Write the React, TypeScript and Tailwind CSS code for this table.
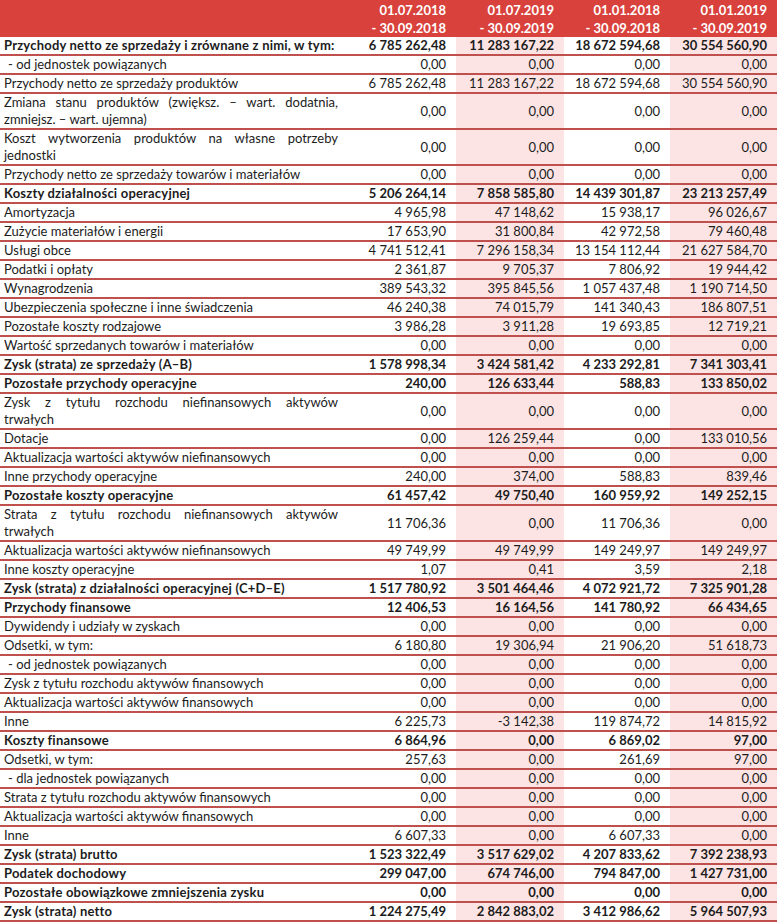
import React from 'react';

interface Row {
  label: string[];
  values: string[];
  bold?: boolean;
  indent?: boolean;
}

const Z = ['0,00', '0,00', '0,00', '0,00'];

const rows: Row[] = [
  { label: ['Przychody netto ze sprzedaży i zrównane z nimi, w tym:'], values: ['6 785 262,48', '11 283 167,22', '18 672 594,68', '30 554 560,90'], bold: true },
  { label: ['- od jednostek powiązanych'], values: Z, indent: true },
  { label: ['Przychody netto ze sprzedaży produktów'], values: ['6 785 262,48', '11 283 167,22', '18 672 594,68', '30 554 560,90'] },
  { label: ['Zmiana stanu produktów (zwiększ. – wart. dodatnia,', 'zmniejsz. – wart. ujemna)'], values: Z },
  { label: ['Koszt wytworzenia produktów na własne potrzeby', 'jednostki'], values: Z },
  { label: ['Przychody netto ze sprzedaży towarów i materiałów'], values: Z },
  { label: ['Koszty działalności operacyjnej'], values: ['5 206 264,14', '7 858 585,80', '14 439 301,87', '23 213 257,49'], bold: true },
  { label: ['Amortyzacja'], values: ['4 965,98', '47 148,62', '15 938,17', '96 026,67'] },
  { label: ['Zużycie materiałów i energii'], values: ['17 653,90', '31 800,84', '42 972,58', '79 460,48'] },
  { label: ['Usługi obce'], values: ['4 741 512,41', '7 296 158,34', '13 154 112,44', '21 627 584,70'] },
  { label: ['Podatki i opłaty'], values: ['2 361,87', '9 705,37', '7 806,92', '19 944,42'] },
  { label: ['Wynagrodzenia'], values: ['389 543,32', '395 845,56', '1 057 437,48', '1 190 714,50'] },
  { label: ['Ubezpieczenia społeczne i inne świadczenia'], values: ['46 240,38', '74 015,79', '141 340,43', '186 807,51'] },
  { label: ['Pozostałe koszty rodzajowe'], values: ['3 986,28', '3 911,28', '19 693,85', '12 719,21'] },
  { label: ['Wartość sprzedanych towarów i materiałów'], values: Z },
  { label: ['Zysk (strata) ze sprzedaży (A–B)'], values: ['1 578 998,34', '3 424 581,42', '4 233 292,81', '7 341 303,41'], bold: true },
  { label: ['Pozostałe przychody operacyjne'], values: ['240,00', '126 633,44', '588,83', '133 850,02'], bold: true },
  { label: ['Zysk z tytułu rozchodu niefinansowych aktywów', 'trwałych'], values: Z },
  { label: ['Dotacje'], values: ['0,00', '126 259,44', '0,00', '133 010,56'] },
  { label: ['Aktualizacja wartości aktywów niefinansowych'], values: Z },
  { label: ['Inne przychody operacyjne'], values: ['240,00', '374,00', '588,83', '839,46'] },
  { label: ['Pozostałe koszty operacyjne'], values: ['61 457,42', '49 750,40', '160 959,92', '149 252,15'], bold: true },
  { label: ['Strata z tytułu rozchodu niefinansowych aktywów', 'trwałych'], values: ['11 706,36', '0,00', '11 706,36', '0,00'] },
  { label: ['Aktualizacja wartości aktywów niefinansowych'], values: ['49 749,99', '49 749,99', '149 249,97', '149 249,97'] },
  { label: ['Inne koszty operacyjne'], values: ['1,07', '0,41', '3,59', '2,18'] },
  { label: ['Zysk (strata) z działalności operacyjnej (C+D–E)'], values: ['1 517 780,92', '3 501 464,46', '4 072 921,72', '7 325 901,28'], bold: true },
  { label: ['Przychody finansowe'], values: ['12 406,53', '16 164,56', '141 780,92', '66 434,65'], bold: true },
  { label: ['Dywidendy i udziały w zyskach'], values: Z },
  { label: ['Odsetki, w tym:'], values: ['6 180,80', '19 306,94', '21 906,20', '51 618,73'] },
  { label: ['- od jednostek powiązanych'], values: Z, indent: true },
  { label: ['Zysk z tytułu rozchodu aktywów finansowych'], values: Z },
  { label: ['Aktualizacja wartości aktywów finansowych'], values: Z },
  { label: ['Inne'], values: ['6 225,73', '-3 142,38', '119 874,72', '14 815,92'] },
  { label: ['Koszty finansowe'], values: ['6 864,96', '0,00', '6 869,02', '97,00'], bold: true },
  { label: ['Odsetki, w tym:'], values: ['257,63', '0,00', '261,69', '97,00'] },
  { label: ['- dla jednostek powiązanych'], values: Z, indent: true },
  { label: ['Strata z tytułu rozchodu aktywów finansowych'], values: Z },
  { label: ['Aktualizacja wartości aktywów finansowych'], values: Z },
  { label: ['Inne'], values: ['6 607,33', '0,00', '6 607,33', '0,00'] },
  { label: ['Zysk (strata) brutto'], values: ['1 523 322,49', '3 517 629,02', '4 207 833,62', '7 392 238,93'], bold: true },
  { label: ['Podatek dochodowy'], values: ['299 047,00', '674 746,00', '794 847,00', '1 427 731,00'], bold: true },
  { label: ['Pozostałe obowiązkowe zmniejszenia zysku'], values: Z, bold: true },
  { label: ['Zysk (strata) netto'], values: ['1 224 275,49', '2 842 883,02', '3 412 986,62', '5 964 507,93'], bold: true },
];

const periods = [
  ['01.07.2018', '- 30.09.2018'],
  ['01.07.2019', '- 30.09.2019'],
  ['01.01.2018', '- 30.09.2018'],
  ['01.01.2019', '- 30.09.2019'],
];

const cols = 'grid grid-cols-[348px_108px_108px_106px_107px]';

const App: React.FC = () => {
  return (
    <div className="w-[777px] bg-white text-[#1c1c1c] text-[13px] font-['Lato','Liberation_Sans',sans-serif]">
      {/* header */}
      <div className={`${cols} h-[37px] bg-[#d9413c] text-white font-bold`}>
        <div />
        {periods.map((p, i) => (
          <div key={i} className="flex flex-col justify-center items-end pr-[10px] leading-[18px]">
            <span>{p[0]}</span>
            <span>{p[1]}</span>
          </div>
        ))}
      </div>

      {rows.map((row, i) => (
        <div key={i} className={`${cols} border-b-2 border-[#c0504d] leading-[17px] ${row.bold ? 'font-bold' : ''}`}>
          <div className={`pr-[10px] ${row.indent ? 'pl-[8px]' : 'pl-[4px]'} ${row.bold ? 'tracking-[0.2px]' : ''}`}>
            {row.label.map((line, j) => (
              <div
                key={j}
                className={j < row.label.length - 1 ? 'text-justify [text-align-last:justify]' : 'whitespace-nowrap'}
              >
                {line}
              </div>
            ))}
          </div>
          {row.values.map((v, j) => (
            <div
              key={j}
              className={`flex items-center justify-end pr-[10px] whitespace-nowrap ${j % 2 === 1 ? 'bg-[#fce4e4]' : ''}`}
            >
              {v}
            </div>
          ))}
        </div>
      ))}
    </div>
  );
};

export default App;
